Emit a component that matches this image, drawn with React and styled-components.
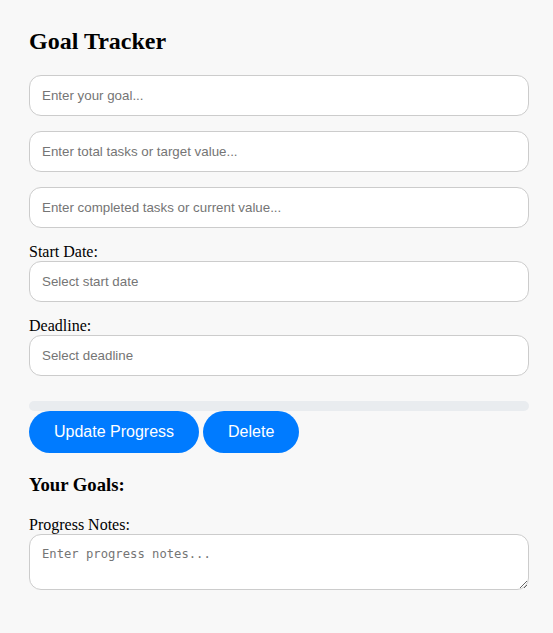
import React from "react";
import styled, { createGlobalStyle } from "styled-components";

const Global = createGlobalStyle`
  html, body { margin: 0; padding: 0; background: #f8f8f8; }
  body { font-family: "Liberation Serif", "Times New Roman", serif; color: #000; }
  * { box-sizing: border-box; }
`;

const Page = styled.div`
  min-height: 633px;
  background: #f8f8f8;
  padding: 27px 24px 20px 29px;
`;

const Container = styled.div`
  width: 500px;
  display: flex;
  flex-direction: column;
`;

const Title = styled.h2`
  font-size: 24px;
  font-weight: bold;
  margin: 0 0 20px;
  line-height: 28px;
`;

const Label = styled.label`
  font-size: 16px;
  line-height: 18px;
  display: block;
`;

const Input = styled.input`
  width: 100%;
  height: 41px;
  padding: 12px;
  border: 1px solid #ccc;
  border-radius: 12px;
  background: #fff;
  font-family: "Liberation Sans", Arial, sans-serif;
  font-size: 13.333px;
  margin: 0 0 15px;
  outline: none;
  &::placeholder { color: #757575; }
`;

const Progress = styled.div`
  height: 10px;
  border-radius: 5px;
  background: #e9ecef;
  margin-top: 10px;
  overflow: hidden;
`;

const Bar = styled.div`
  height: 100%;
  background: #007bff;
`;

const Buttons = styled.div`
  display: flex;
  gap: 4px;
`;

const Button = styled.button`
  height: 42px;
  padding: 0 25px;
  border: none;
  border-radius: 21px;
  background: #007bff;
  color: #fff;
  font-family: "Liberation Sans", Arial, sans-serif;
  font-size: 16px;
  cursor: pointer;
`;

const SubTitle = styled.h3`
  font-size: 18.72px;
  font-weight: bold;
  margin: 21px 0 20px;
  line-height: 22px;
`;

const TextArea = styled.textarea`
  width: 100%;
  height: 56px;
  padding: 12px;
  border: 1px solid #ccc;
  border-radius: 12px;
  background: #fff;
  font-family: "DejaVu Sans Mono", "Liberation Mono", monospace;
  font-size: 12.2px;
  display: block;
  outline: none;
  &::placeholder { color: #757575; }
`;

export default function App() {
  return (
    <>
      <Global />
      <Page>
        <Container>
          <Title>Goal Tracker</Title>
          <Input placeholder="Enter your goal..." />
          <Input placeholder="Enter total tasks or target value..." />
          <Input placeholder="Enter completed tasks or current value..." />
          <Label>Start Date:</Label>
          <Input placeholder="Select start date" />
          <Label>Deadline:</Label>
          <Input placeholder="Select deadline" />
          <Progress>
            <Bar style={{ width: "0%" }} />
          </Progress>
          <Buttons>
            <Button>Update Progress</Button>
            <Button>Delete</Button>
          </Buttons>
          <SubTitle>Your Goals:</SubTitle>
          <Label>Progress Notes:</Label>
          <TextArea placeholder="Enter progress notes..." />
        </Container>
      </Page>
    </>
  );
}
